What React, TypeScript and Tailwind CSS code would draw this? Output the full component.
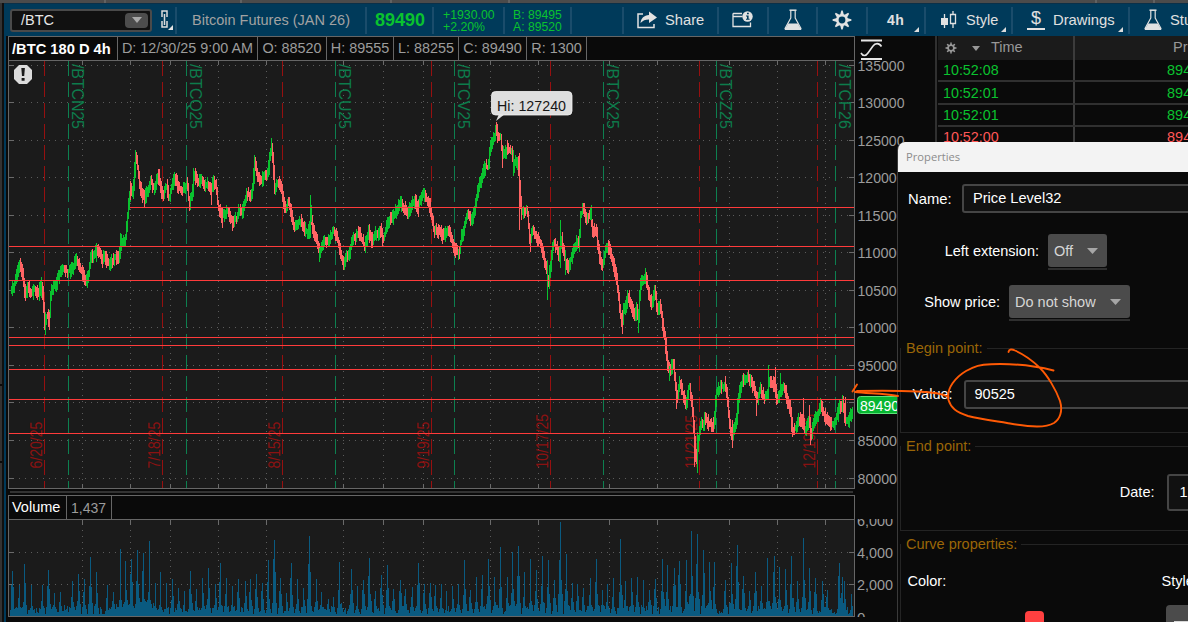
import type { ReactNode } from "react";

/* ---------- chart data (plot coordinates: x, y of the swing points) ---------- */

const SWINGS =
  "11,290 15,283 17,275 20,264 23,276 25,294 28,288 32,294 34,288 38,294 41,284 43,294 44,326 47,314 49,322 51,288 55,286 58,278 62,268 68,272 72,269 76,260 79,266 82,273 86,283 88,276 91,254 93,257 96,250 99,253 103,261 104,254 108,264 115,258 119,257 121,242 125,241 127,224 128,206 130,190 132,195 134,182 135,158 137,162 139,182 142,196 144,198 147,192 151,180 153,189 157,180 158,173 161,188 163,199 166,183 169,199 172,184 175,177 178,187 182,190 187,184 189,204 192,194 194,172 198,184 202,177 204,187 207,184 211,192 213,182 216,186 218,208 222,216 227,210 232,221 237,218 239,208 242,213 247,193 251,199 253,182 254,160 257,176 261,183 264,175 267,178 269,163 271,146 273,158 274,188 278,182 282,192 285,211 288,202 292,217 294,227 299,222 301,222 305,231 309,232 311,215 312,228 317,240 319,254 324,240 328,243 333,230 337,238 341,256 343,264 346,254 348,259 352,240 359,233 364,246 369,231 372,242 376,232 378,237 380,229 383,240 388,221 392,218 397,208 401,203 406,212 410,209 414,200 418,207 421,196 424,196 429,203 432,219 434,232 440,230 443,237 448,228 451,235 454,249 459,254 461,238 463,232 467,214 471,222 474,212 477,195 480,182 485,167 488,167 490,148 492,142 495,134 496,129 498,137 501,138 502,156 507,148 510,152 512,149 513,166 516,162 518,162 520,192 521,212 524,213 527,210 529,230 530,242 532,228 536,238 540,243 543,254 547,273 548,288 549,277 551,260 553,244 557,247 559,259 561,236 563,250 565,262 568,269 572,255 577,242 579,247 580,217 583,210 586,218 591,213 592,231 596,230 598,247 600,260 603,267 605,250 609,247 612,259 616,275 618,292 620,312 622,326 623,313 628,296 631,303 634,319 637,308 638,325 640,288 642,279 646,278 648,290 651,304 655,291 657,312 660,303 662,320 665,340 667,362 670,372 673,361 675,380 677,399 680,381 683,396 686,405 689,384 692,406 693,423 695,447 696,463 698,440 702,420 703,432 704,415 708,423 714,425 716,393 720,388 726,386 728,410 730,427 732,436 736,424 738,400 742,381 747,377 751,381 754,390 757,402 760,388 764,398 767,396 769,379 772,383 775,387 777,402 781,388 785,387 787,400 790,407 792,429 795,429 798,420 802,420 805,430 809,420 811,436 814,421 818,413 821,404 823,413 828,423 833,425 837,417 839,407 843,403 845,419 848,422 852,410";

/* Long wicks: x, top, bottom, direction (1 = up bar) */
const WICKS: [number, number, number, number][] = [
  [20, 258, 272, 0], [25, 285, 301, 0], [41, 277, 298, 1], [45, 312, 335, 1], [49, 312, 330, 0], [76, 256, 266, 1],
  [96, 243, 262, 1], [102, 256, 268, 0], [120, 233, 256, 1], [130, 181, 200, 0], [135, 150, 178, 1], [144, 190, 207, 0],
  [158, 169, 185, 0], [189, 196, 211, 0], [193, 168, 177, 1], [211, 184, 205, 0], [222, 208, 228, 0], [232, 216, 231, 0],
  [254, 155, 184, 1], [271, 138, 156, 1], [310, 195, 238, 1], [311, 205, 222, 1], [319, 248, 262, 1], [343, 256, 270, 0], [369, 224, 243, 0],
  [401, 197, 212, 1], [418, 200, 217, 0], [424, 190, 202, 1], [459, 246, 259, 0], [496, 122, 136, 0], [502, 145, 168, 0],
  [507, 140, 155, 0], [513, 150, 176, 1], [519, 153, 230, 0], [530, 235, 252, 0], [547, 260, 300, 1], [560, 220, 268, 1],
  [565, 250, 275, 1], [583, 203, 214, 0], [591, 205, 220, 1], [608, 240, 255, 0], [622, 310, 334, 0], [638, 312, 333, 1],
  [645, 268, 282, 1], [669, 366, 381, 1], [676, 392, 409, 0], [687, 390, 408, 1], [694, 420, 467, 0], [697, 432, 473, 1],
  [732, 420, 448, 0], [725, 376, 392, 0], [756, 394, 416, 0], [768, 365, 396, 1], [775, 367, 392, 0], [780, 373, 393, 1],
  [803, 398, 425, 0], [809, 405, 427, 0], [810, 422, 445, 0], [820, 398, 410, 1], [842, 395, 412, 1], [845, 397, 426, 0],
];

const rand = (n: number) => {
  const s = Math.sin(n * 12.9898 + 4.1414) * 43758.5453;
  return s - Math.floor(s);
};

const points = SWINGS.split(" ").map((p) => p.split(",").map(Number));

const midAt = (x: number) => {
  let i = 0;
  while (i < points.length - 2 && points[i + 1][0] < x) i++;
  const [x0, y0] = points[i];
  const [x1, y1] = points[i + 1];
  return y0 + ((y1 - y0) * (x - x0)) / (x1 - x0);
};

const candles = Array.from({ length: 842 }, (_, i) => {
  const x = i + 11;
  const a = midAt(x - 0.5);
  const b = midAt(Math.min(x + 0.5, 852));
  const top = Math.min(a, b) - 2 - rand(x) * 6;
  const bottom = Math.max(a, b) + 2 + rand(x + 900) * 6;
  const up = b - a + (rand(Math.floor(x / 2) + 300) - 0.5) * 3.6 < 0;
  return { x, top: Math.max(Math.round(top), 122), height: Math.round(bottom - top), up };
});

const VOLUME_LEFT: number[][] = [
  [37, 273], [57, 315], [73, 252], [94, 314], [127, 316], [145, 270], [163, 340], [181, 336], [217, 303], [235, 282], [253, 297],
  [271, 231], [289, 277], [322, 316], [340, 336], [361, 207], [376, 243], [394, 237], [412, 210], [430, 219], [448, 183], [466, 310],
  [481, 277], [500, 308], [517, 297], [535, 324], [553, 333], [571, 274], [589, 326], [607, 294], [626, 264], [645, 313], [662, 249],
  [680, 294], [697, 318], [715, 297], [736, 303], [752, 297], [769, 282], [787, 309], [805, 240], [823, 180], [841, 294], [859, 340],
  [874, 249], [892, 297], [911, 324], [928, 168], [948, 297], [965, 336], [985, 356], [1000, 351], [1018, 246], [1054, 267], [1072, 318],
  [1090, 300], [1108, 234], [1126, 333], [1144, 285], [1162, 255], [1180, 327], [1200, 300], [1217, 327], [1237, 321], [1255, 249],
  [1272, 313], [1290, 309], [1305, 315],
];
const VOLUME_RIGHT: number[][] = [
  [4, 312], [20, 333], [38, 318], [55, 312], [73, 240], [91, 330], [109, 291], [127, 285], [146, 237], [164, 291], [181, 201],
  [202, 291], [217, 217], [236, 198], [254, 276], [271, 237], [289, 270], [307, 228], [325, 240], [343, 300], [361, 126], [379, 222],
  [397, 309], [413, 312], [430, 324], [450, 294], [469, 237], [486, 330], [502, 312], [521, 294], [541, 177], [557, 303], [575, 294],
  [592, 291], [611, 300], [629, 330], [647, 297], [667, 237], [683, 255], [702, 264], [718, 243], [738, 240], [754, 153], [772, 162],
  [790, 210], [808, 246], [824, 246], [856, 300], [874, 249], [892, 195], [911, 288], [929, 333], [947, 276], [965, 318], [982, 234],
  [1003, 228], [1018, 261], [1036, 267], [1054, 228], [1072, 303], [1090, 174], [1108, 264], [1126, 294], [1147, 303], [1163, 330],
  [1198, 249], [1208, 291], [1214, 303], [1234, 342],
];

const volume = (() => {
  const h = Array.from({ length: 843 }, (_, i) => 2 + Math.pow(rand(i + 77), 2) * 9 + (i > 100 && i < 145 ? 5 : 0));
  const peaks = [
    ...VOLUME_LEFT.map(([x, y]) => [Math.floor(x / 3), (408 - y) / 3]),
    ...VOLUME_RIGHT.map(([x, y]) => [440 + Math.floor(x / 3), (408 - y) / 3]),
  ];
  for (const [x, p] of peaks) {
    const i = x - 10;
    const around: [number, number][] = [
      [-2, 0.1 + rand(x + 2) * 0.15],
      [-1, 0.2 + rand(x) * 0.55],
      [0, 1],
      [1, 0.2 + rand(x + 5) * 0.45],
      [2, 0.1 + rand(x + 9) * 0.2],
    ];
    for (const [d, f] of around) {
      if (h[i + d] !== undefined && h[i + d] < p * f) h[i + d] = p * f;
    }
  }
  return h.map((v) => Math.round(v));
})();

const GRID_X = [82, 130, 170, 218, 266, 343, 383, 423, 490, 538, 609, 657, 729, 777, 825];
const PRICES = Array.from({ length: 12 }, (_, i) => ({ price: 135000 - i * 5000, y: Math.floor(65 + i * 37.55) }));
const LEVELS = [246, 280, 337, 345, 369, 399, 433];
const EXPIRATIONS: [number, string][] = [
  [44, "6/20/25"], [162, "7/18/25"], [282, "8/15/25"], [431, "9/19/25"], [550, "10/17/25"], [699, "11/21/25"], [817, "12/19/25"],
];
const CONTRACTS: [number, string][] = [
  [68, "/BTCN25"], [186, "/BTCQ25"], [335, "/BTCU25"], [454, "/BTCV25"], [603, "/BTCX25"], [716, "/BTCZ25"], [835, "/BTCF26"],
];

/* ---------- charts ---------- */

function PriceChart() {
  return (
    <svg width="847" height="429" viewBox="8 60 847 429" className="block shrink-0" fontFamily="Liberation Sans, Arial, sans-serif">
      <rect x="8" y="60" width="847" height="429" fill="#1b1b1b" />
      <g shapeRendering="crispEdges">
        {PRICES.map(({ y }) => (
          <g key={y} stroke="#5c5c5c">
            <path d={`M19 ${y + 0.5}H849`} strokeDasharray="1 5" />
            <path d={`M9 ${y + 0.5}h5M849 ${y + 0.5}h5`} stroke="#6a6a6a" />
          </g>
        ))}
        {GRID_X.map((x) => (
          <g key={x} stroke="#5c5c5c">
            <path d={`M${x + 0.5} 71V484`} strokeDasharray="1 5" />
            <path d={`M${x + 0.5} 61v4M${x + 0.5} 484v4`} stroke="#6a6a6a" />
          </g>
        ))}
        {EXPIRATIONS.map(([x]) => (
          <path key={x} d={`M${x + 0.5} 61V488`} stroke="#961010" strokeDasharray="15 6" />
        ))}
        {CONTRACTS.map(([x]) => (
          <path key={x} d={`M${x + 0.5} 61V488`} stroke="#0d8050" strokeDasharray="15 6" />
        ))}
      </g>
      {EXPIRATIONS.map(([x, label]) => (
        <text key={x} transform={`translate(${x - 2} 468.5) rotate(-90) scale(1 1.16)`} fontSize="14" fill="#8a1212">
          {label}
        </text>
      ))}
      {CONTRACTS.map(([x, label]) => (
        <text key={x} transform={`translate(${x + 4} 64) rotate(90)`} fontSize="16" fill="#0d7c4c" textLength="65">
          {label}
        </text>
      ))}
      <g shapeRendering="crispEdges">
        {candles.map((c) => (
          <rect key={c.x} x={c.x} y={c.top} width="1" height={c.height} fill={c.up ? "#0ac22f" : "#ff6464"} />
        ))}
        {WICKS.map(([x, top, bottom, up]) => (
          <rect key={`${x}-${top}`} x={x} y={top} width="1" height={bottom - top} fill={up ? "#0ac22f" : "#ff6464"} />
        ))}
        <path d="M130 207.5H854" stroke="#ff3b3b" />
        {LEVELS.map((y) => (
          <path key={y} d={`M9 ${y + 0.5}H854`} stroke="#ff3b3b" />
        ))}
        <path d="M8 60.5H854.5V488.5H8.5V60" fill="none" stroke="#666666" />
      </g>
      <path d="M496 121L499 114H505Z" fill="#dedede" />
      <rect x="491.5" y="91.5" width="80.500" height="23.500" rx="4" fill="#dedede" stroke="#f2f2f2" strokeWidth="0.8" />
      <text x="497" y="111" fontSize="15" fill="#161616" textLength="69" lengthAdjust="spacingAndGlyphs">
        Hi: 127240
      </text>
      <path d="M19 65h8l5 5v9l-5 5h-8l-5-5v-9z" fill="#dcdcdc" />
      <path d="M21.300 68h3.600l-.7 8h-2.200zM21.600 78h3v2.800h-3z" fill="#1b1b1b" />
    </svg>
  );
}

function VolumeChart() {
  return (
    <svg width="847" height="98" viewBox="8 519 847 98" className="block shrink-0" shapeRendering="crispEdges">
      <rect x="8" y="519" width="847" height="98" fill="#1b1b1b" />
      {[552, 584].map((y) => (
        <g key={y} stroke="#5c5c5c">
          <path d={`M19 ${y + 0.5}H849`} strokeDasharray="1 5" />
          <path d={`M9 ${y + 0.5}h5M849 ${y + 0.5}h5`} stroke="#6a6a6a" />
        </g>
      ))}
      {GRID_X.map((x) => (
        <g key={x} stroke="#5c5c5c">
          <path d={`M${x + 0.5} 530V615`} strokeDasharray="1 5" />
          <path d={`M${x + 0.5} 520v5`} stroke="#6a6a6a" />
        </g>
      ))}
      {volume.map((h, i) => (
        <rect key={i} x={i + 10} y={616 - h} width="1" height={h} fill="#0a5a80" />
      ))}
      <path d="M8 519.5H854.500V616.500H8.500V519" fill="none" stroke="#666666" />
    </svg>
  );
}

function Axis() {
  return (
    <svg width="80" height="586" viewBox="855 36 80 586" className="block shrink-0 bg-[#0a0a0a]" fontFamily="Liberation Sans, Arial, sans-serif">
      <defs>
        <clipPath id="volume-axis">
          <rect x="855" y="519" width="80" height="98" />
        </clipPath>
      </defs>
      <g fill="#9c9c9c" fontSize="15">
        {PRICES.filter((p) => p.price !== 90000).map(({ price, y }) => (
          <text key={price} x="857.500" y={y + 6} textLength={price > 99999 ? 47 : 39.500} lengthAdjust="spacingAndGlyphs">
            {price}
          </text>
        ))}
        <g clipPath="url(#volume-axis)">
          {["6,000", "4,000", "2,000"].map((t, i) => (
            <text key={t} x="857" y={525.500 + i * 32.300} textLength="36" lengthAdjust="spacingAndGlyphs">
              {t}
            </text>
          ))}
          <text x="857" y="622.500">0</text>
        </g>
      </g>
      <path d="M861 40.500h21M861 59h21" stroke="#e6e6e6" strokeWidth="2" />
      <path d="M861 53c2 3.500 5 3 7 0l5-7c2-3 6-3.500 8.500 .5" fill="none" stroke="#e6e6e6" strokeWidth="1.600" />
      <rect x="857.500" y="396.500" width="52" height="17" rx="3" fill="#06b631" stroke="#5ee07b" />
      <text x="860" y="411" fontSize="15" fill="#ffffff" textLength="39" lengthAdjust="spacingAndGlyphs">
        89490
      </text>
    </svg>
  );
}

/* ---------- toolbar ---------- */

function Flask() {
  return (
    <svg width="20" height="24" viewBox="0 0 20 24" fill="none" className="shrink-0">
      <path d="M6.500 2.200h7" stroke="#e2e2e2" strokeWidth="1.500" />
      <path d="M7.800 2.500v7.500L2 20.500h16L12.200 10v-7.500" stroke="#e2e2e2" strokeWidth="1.200" strokeLinejoin="round" />
      <path d="M5.300 15.500h9.400l3.800 6.500h-17z" fill="#e2e2e2" />
    </svg>
  );
}

function Gear({ size, color }: { size: number; color: string }) {
  return (
    <svg width={size} height={size} viewBox="0 0 20 20" className="shrink-0">
      <circle cx="10" cy="10" r="4.700" fill="none" stroke={color} strokeWidth="2.600" />
      {[0, 45, 90, 135, 180, 225, 270, 315].map((a) => (
        <path key={a} d="M8.100 5L9.300 .6h1.400L11.900 5z" fill={color} transform={`rotate(${a} 10 10)`} />
      ))}
    </svg>
  );
}

function Corner() {
  return (
    <svg width="5" height="5" viewBox="0 0 5 5" className="absolute right-[5px] bottom-[2px]">
      <path d="M5 0V5H0z" fill="#dcdcdc" />
    </svg>
  );
}

function Cell({ className, children }: { className: string; children?: ReactNode }) {
  return (
    <div className={`relative flex h-[27px] shrink-0 items-center border-r-2 border-[#1a4c6b] ${className}`}>{children}</div>
  );
}

function Toolbar() {
  return (
    <div className="flex h-[33px] w-[1184px] shrink-0 items-center overflow-hidden border-t border-[#0b3048] bg-[#003a5a] text-[14.500px] whitespace-nowrap text-[#e0e0e0]">
      <Cell className="w-[173px] pl-1.5">
        <div className="flex h-[23px] w-[142px] items-center justify-between rounded-[3px] border-2 border-[#4a4a4a] bg-[#111111] pr-0.5 pl-[9px]">
          <span className="pt-px text-[14.500px] text-[#e6e6e6]">/BTC</span>
          <span className="flex h-[15px] w-[23px] items-center justify-center rounded-sm bg-[#4d4d4d]">
            <svg width="10" height="6"><path d="M0 0h10L5 6z" fill="#a9a9a9" /></svg>
          </span>
        </div>
        <svg width="14" height="22" viewBox="0 0 14 22" className="ml-2" fill="none">
          <path d="M2 8V2h5v6M2 12v6h5v-6M4.500 5v11" stroke="#dddddd" strokeWidth="1.500" />
          <path d="M13 16v5H8z" fill="#e2e2e2" />
        </svg>
      </Cell>
      <Cell className="w-[190px] justify-center pt-px text-[#a2a2a2]">Bitcoin Futures (JAN 26)</Cell>
      <Cell className="w-[67px] justify-center pt-px pl-px text-[18px] font-bold text-[#0ac22f]">89490</Cell>
      <Cell className="w-[71px] pt-0.5 pl-[9px] text-[12.300px] leading-3 text-[#0ac22f]">
        <div>
          <div>+1930.00</div>
          <div>+2.20%</div>
        </div>
      </Cell>
      <Cell className="w-[67px] pt-0.5 pl-2 text-[12.200px] leading-3 text-[#0ac22f]">
        <div>
          <div>B: 89495</div>
          <div>A: 89520</div>
        </div>
      </Cell>
      <Cell className="w-[52px]" />
      <Cell className="w-[95px] gap-2 pl-[13px]">
        <svg width="20" height="18" viewBox="0 0 20 18">
          <path d="M6 3H1v13.500h16V13" fill="none" stroke="#e2e2e2" strokeWidth="1.500" />
          <path d="M3.500 12C4 7 7 4.500 12 4V.5L20 6.500L12 12V8.500C8 8.500 6 9.500 3.500 12z" fill="#e2e2e2" />
        </svg>
        <span className="pt-px text-[14.700px]">Share</span>
      </Cell>
      <Cell className="w-[50px] justify-center pr-px">
        <svg width="21" height="18" viewBox="0 0 21 18">
          <path d="M10 2.500H1.500L1 3v12.500h17.500v-4M1 5.500h9.500" fill="none" stroke="#e2e2e2" strokeWidth="1.300" />
          <circle cx="15.500" cy="5.500" r="5.200" fill="#e2e2e2" />
          <path d="M15 1.700h1.800v1.500H15zM14 4.500h2.600v3.300h1v1h-3.600v-1h1V5.500h-1z" fill="#003a5a" />
        </svg>
      </Cell>
      <Cell className="w-[49px] justify-center"><Flask /></Cell>
      <Cell className="w-[50px] justify-center"><Gear size={20} color="#e2e2e2" /></Cell>
      <Cell className="w-[58px] pt-px pl-[19px] text-[14px] font-bold tracking-wide">4h<Corner /></Cell>
      <Cell className="w-[87px] gap-[9px] pl-[15px]">
        <svg width="16" height="19" viewBox="0 0 16 19">
          <path d="M3.500 3v14M12 0v17" stroke="#e2e2e2" strokeWidth="1.300" />
          <path d="M0 7h7v7H0z" fill="#e2e2e2" />
          <path d="M9.500 3.500h5v9h-5z" fill="#003a5a" stroke="#e2e2e2" strokeWidth="1.300" />
        </svg>
        <span className="pt-px text-[14.500px]">Style</span>
        <Corner />
      </Cell>
      <Cell className="w-[117px] gap-2 pl-[14px]">
        <span className="flex h-[19px] w-[18px] flex-col items-center border-b-2 border-[#e2e2e2] text-[18px] leading-[15px]">$</span>
        <span className="pt-px text-[14.800px]">Drawings</span>
        <Corner />
      </Cell>
      <div className="flex items-center gap-[7px] pl-[13px]">
        <Flask />
        <span className="pt-px text-[14.700px]">Studies</span>
      </div>
    </div>
  );
}

/* ---------- side panels ---------- */

const TRADES = [
  { time: "10:52:08", price: "89490", tone: "text-[#0ac22f]" },
  { time: "10:52:01", price: "89490", tone: "text-[#0ac22f]" },
  { time: "10:52:01", price: "89490", tone: "text-[#0ac22f]" },
  { time: "10:52:00", price: "89485", tone: "text-[#ff5757]" },
];

function TimeAndSales() {
  return (
    <div className="flex w-[253px] shrink-0 flex-col overflow-hidden border-l-2 border-[#303030] bg-[#0a0a0a] pl-px text-[14.500px] whitespace-nowrap">
      <div className="flex h-6 shrink-0 bg-[#1b1b1b] text-[#989898]">
        <div className="flex w-[137px] shrink-0 items-center border-r-2 border-[#3c3c3c] pl-[7px]">
          <Gear size={12} color="#989898" />
          <svg width="8" height="5" className="ml-[15px]"><path d="M0 0h8L4 5z" fill="#989898" /></svg>
          <span className="ml-[11px]">Time</span>
        </div>
        <div className="flex items-center pl-[98px]">Price</div>
      </div>
      {TRADES.map((t, i) => (
        <div key={i} className={`flex h-[22.300px] shrink-0 border-b-2 border-[#303030] ${t.tone}`}>
          <div className="flex w-[137px] shrink-0 items-center border-r-2 border-[#3c3c3c] pt-0.5 pl-[5px] text-[14.300px]">{t.time}</div>
          <div className="flex items-center pt-0.5 pl-[92px]">{t.price}</div>
        </div>
      ))}
    </div>
  );
}

function Select({ className, children }: { className: string; children: ReactNode }) {
  return (
    <div className={`flex h-9 shrink-0 flex-col justify-between border-b-2 border-[#2f2f2f] ${className}`}>
      <div className="flex h-[33px] items-center justify-between rounded-[3px] bg-[#4b4b4b] pr-[9px] pl-1.5 text-[#d6d6d6]">
        <span className="pt-0.5">{children}</span>
        <svg width="11" height="6"><path d="M0 0h11L5.500 6z" fill="#a6a6a6" /></svg>
      </div>
    </div>
  );
}

function Group({ title, className, children }: { title: string; className: string; children: ReactNode }) {
  return (
    <div className={`flex flex-col ${className}`}>
      <div className="flex h-[18px] shrink-0 items-center gap-1">
        <span className="w-0.5" />
        <span className="pt-0.5 text-[#9a6607]">{title}</span>
        <span className="h-px flex-1 bg-[#242424]" />
      </div>
      <div className="-mt-[9px] ml-[-0.500px] flex flex-1 flex-col border-b border-l border-[#242424]">{children}</div>
    </div>
  );
}

function Properties() {
  return (
    <div className="absolute top-[142px] left-[897px] flex h-[480px] w-[291px] flex-col overflow-hidden rounded-tl-lg border-l border-[#3a3a3a] bg-[#0a0a0a] text-[14.500px] whitespace-nowrap text-white">
      <div className="flex h-[30px] shrink-0 items-center bg-[#f3f3f3] pl-2 font-['Open_Sans','Noto_Sans',sans-serif] text-[11.200px] text-[#8c8c8c]">
        Properties
      </div>
      <div className="mt-3 flex h-[29px] shrink-0 items-center pl-2.5 text-[14.800px]">
        <span className="w-[54px] pt-px">Name:</span>
        <div className="-mr-2 flex h-full flex-1 items-center rounded-[3px] border-2 border-[#454545] bg-[#111111] pt-px pl-[9px] text-[14.600px]">Price Level32</div>
      </div>
      <div className="mt-[21px] flex h-9 shrink-0 items-center">
        <span className="w-[141px] text-right">Left extension:</span>
        <Select className="ml-[9px] w-[59px]">Off</Select>
      </div>
      <div className="mt-[15px] flex h-9 shrink-0 items-center">
        <span className="w-[102px] text-right">Show price:</span>
        <Select className="ml-[9px] w-[121px]">Do not show</Select>
      </div>
      <div className="mt-[18px] flex flex-1 flex-col pl-0.5">
        <Group title="Begin point:" className="h-[94px] shrink-0">
          <div className="mt-[32px] flex h-[29px] items-center pl-3">
            <span className="w-[51px]">Value:</span>
            <div className="-mr-2 flex h-full flex-1 items-center rounded-[3px] border-2 border-[#454545] bg-[#111111] pl-[9px]">90525</div>
          </div>
        </Group>
        <Group title="End point:" className="mt-1 h-[94px] shrink-0">
          <div className="mt-[28px] flex h-[37px] items-center">
            <span className="w-[254px] shrink-0 text-right">Date:</span>
            <div className="-mr-9 ml-3 flex h-full flex-1 items-center rounded-[3px] border-2 border-[#454545] bg-[#111111] pl-[11px]">12/30</div>
          </div>
        </Group>
        <Group title="Curve properties:" className="mt-1 h-[98px] shrink-0">
          <div className="mt-[28px] flex h-5 items-center pl-[7px]">
            <span className="w-[254px] shrink-0">Color:</span>
            <span>Style:</span>
          </div>
          <div className="mt-[13px] flex">
            <div className="mt-1.5 ml-[124px] h-8 w-[19px] shrink-0 rounded-sm bg-[#ff4040]" />
            <div className="ml-[122px] flex h-9 w-12 shrink-0 items-start rounded-sm bg-[#4b4b4b] pt-4 pl-2">
              <span className="h-0.5 w-12 bg-[#d8d8d8]" />
            </div>
          </div>
        </Group>
      </div>
    </div>
  );
}

function Annotation() {
  return (
    <svg width="1188" height="622" className="pointer-events-none absolute top-0 left-0" fill="none" stroke="#ff5a05" strokeWidth="1.900" strokeLinecap="round" strokeLinejoin="round">
      <path d="M1008.500 352C1009 349 1012 349 1015 350.500C1024 354.500 1033 361 1040 368C1048 376 1056 390 1060 401C1063 411 1060 419 1054 423C1049 426 1045 426.500 1037 426.500C1025 426.500 1013 424 1007 423C995 421 980 419 968 416C956 412 951 408 948.500 400C946 388 956 377 966 371C975 366 980 364.500 991 364.200C1010 363.500 1032 365 1053.500 370.500" />
      <path d="M948.500 397C943 394 930 392 918 391.500C898 390.500 878 390.500 857 391L855 392C868 393.500 884 393.500 898 396" />
      <path d="M857 384.500L852.500 391.500" />
    </svg>
  );
}

/* ---------- page ---------- */

const STATS = ["D: 12/30/25 9:00 AM", "O: 88520", "H: 89555", "L: 88255", "C: 89490", "R: 1300"];
const STAT_WIDTHS = ["w-[140px]", "w-[69px]", "w-[67px]", "w-[65px]", "w-[68px]", "w-[60px]"];

export default function App() {
  return (
    <div className="relative flex h-[622px] w-[1188px] flex-col overflow-hidden bg-[#0a0a0a] font-['Liberation_Sans',Arial,sans-serif]">
      <div className="flex h-[3px] shrink-0 bg-[#4b4b4b]">
        {["w-[106px]", "w-[136px]", "w-[150px]", "w-[118px]", "w-[587px]", "w-[58px]"].map((w) => (
          <span key={w} className={`shrink-0 border-r-2 border-[#626262] ${w}`} />
        ))}
      </div>
      <div className="flex min-h-0 flex-1">
        <div className="flex w-1 shrink-0 flex-col gap-0.5 border-r-2 border-[#101010]">
          <span className="h-[381px] bg-[#333333]" />
          <span className="h-[75px] bg-[#333333]" />
          <span className="flex-1 bg-[#333333]" />
        </div>
        <div className="flex min-w-0 flex-1 flex-col">
          <Toolbar />
          <div className="flex min-h-0 flex-1">
            <div className="w-1 shrink-0 border-l-2 border-[#003a5a]" />
            <div className="flex w-[847px] shrink-0 flex-col">
              <div className="flex h-6 shrink-0 border-t border-r border-l border-[#666666] text-[14.400px] whitespace-nowrap">
                <div className="flex w-[109px] shrink-0 items-center border-r border-[#666666] pt-px pl-[3px] text-[14.700px] font-bold text-white">/BTC 180 D 4h</div>
                {STATS.map((s, i) => (
                  <div key={s} className={`flex shrink-0 items-center justify-center border-r border-[#666666] pt-px text-[#9c9c9c] ${STAT_WIDTHS[i]}`}>
                    {s}
                  </div>
                ))}
              </div>
              <PriceChart />
              <div className="m-0.5 h-0.5 shrink-0 bg-[#333333]" />
              <div className="flex h-6 shrink-0 border-t border-r border-l border-[#666666] text-[14.500px]">
                <div className="flex w-[58px] items-center border-r border-[#666666] pt-px pl-[3px] text-white">Volume</div>
                <div className="flex w-[45px] items-center border-r border-[#666666] pt-px pl-1 text-[14px] text-[#9c9c9c]">1,437</div>
              </div>
              <VolumeChart />
            </div>
            <Axis />
            <TimeAndSales />
          </div>
        </div>
      </div>
      <Properties />
      <Annotation />
    </div>
  );
}
